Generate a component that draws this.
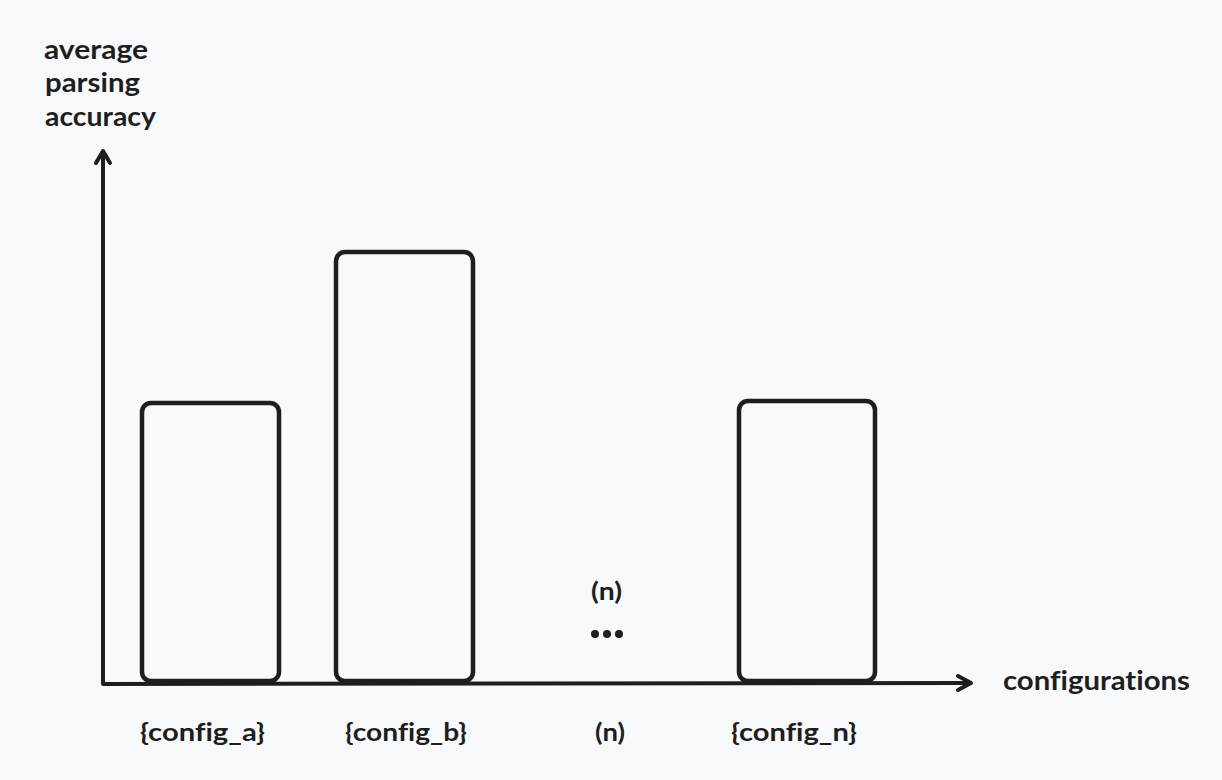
const ink = "#1e1e1e";

type Bar = { x: number; y: number; w: number; h: number };

const bars: Bar[] = [
  { x: 142, y: 403, w: 137, h: 278 },
  { x: 336, y: 252, w: 137, h: 429 },
  { x: 739, y: 401, w: 136, h: 280 },
];

const labels = [
  { text: "{config_a}", x: 140, w: 125 },
  { text: "{config_b}", x: 345, w: 122 },
  { text: "(n)", x: 595, w: 30 },
  { text: "{config_n}", x: 731, w: 126 },
];

function Chart() {
  return (
    <svg
      width={1222}
      height={780}
      viewBox="0 0 1222 780"
      className="block"
      style={{ fontFamily: "Lato, 'Noto Sans', sans-serif", fontVariantLigatures: "none" }}
    >
      {/* y axis label */}
      <g fill={ink} fontSize={26} fontWeight={700}>
        <text x={44} y={59} textLength={104} lengthAdjust="spacingAndGlyphs">
          average
        </text>
        <text x={45} y={92} textLength={95} lengthAdjust="spacingAndGlyphs">
          parsing
        </text>
        <text x={45} y={126} textLength={111} lengthAdjust="spacingAndGlyphs">
          accuracy
        </text>
        <text x={1003} y={690} textLength={187} lengthAdjust="spacingAndGlyphs">
          configurations
        </text>
      </g>

      {/* axes */}
      <g stroke={ink} strokeWidth={4} fill="none" strokeLinecap="round" strokeLinejoin="round">
        <path d="M103 152 L103 684 L970 683" />
        <path d="M96 163 L103 151 L110 163" />
        <path d="M958 676 L971 683 L958 690" />
      </g>

      {/* bars */}
      <g stroke={ink} strokeWidth={4.5} fill="none">
        {bars.map((b, i) => (
          <rect key={i} x={b.x} y={b.y} width={b.w} height={b.h} rx={9} />
        ))}
      </g>

      {/* ellipsis column */}
      <text x={591} y={600} fill={ink} fontSize={24} fontWeight={700} textLength={31} lengthAdjust="spacingAndGlyphs">
        (n)
      </text>
      <g fill={ink}>
        <circle cx={595} cy={634} r={4} />
        <circle cx={607} cy={634} r={4} />
        <circle cx={619} cy={634} r={4} />
      </g>

      {/* x labels */}
      <g fill={ink} fontSize={24} fontWeight={700}>
        {labels.map((l) => (
          <text key={l.text} x={l.x} y={741} textLength={l.w} lengthAdjust="spacingAndGlyphs">
            {l.text}
          </text>
        ))}
      </g>
    </svg>
  );
}

export default function App() {
  return (
    <div className="w-[1222px] h-[780px] overflow-hidden bg-[#f8f9fa]">
      <Chart />
    </div>
  );
}
